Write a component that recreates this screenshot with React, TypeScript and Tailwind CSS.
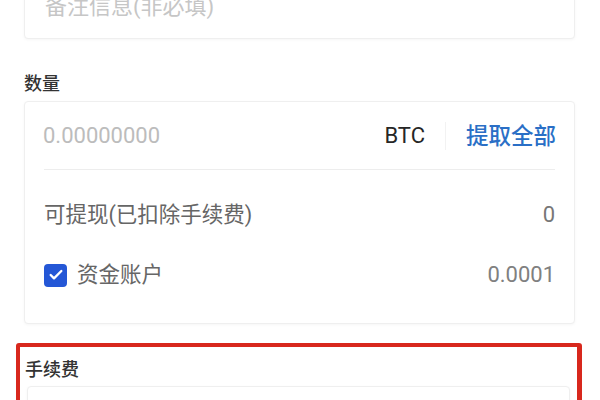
import { Check } from "lucide-react";

const FONT = "font-['Roboto','Noto_Sans_CJK_SC',sans-serif]";

const Card = ({ className = "", children }: { className?: string; children: React.ReactNode }) => (
  <div
    className={`bg-white border border-[#efefef] rounded-[4px] shadow-[0_1px_3px_rgba(0,0,0,0.04)] ${className}`}
  >
    {children}
  </div>
);

const App = () => {
  return (
    <div className={`w-[600px] h-[400px] overflow-hidden bg-white ${FONT}`}>
      <div className="px-[24px] pr-[25px]">
        {/* Remark */}
        <Card className="mt-[-26px] h-[65px] flex items-center px-[20px]">
          <span className="text-[22px] leading-[30px] text-[#c6c6c6]">备注信息(非必填)</span>
        </Card>

        {/* Amount */}
        <div className="mt-[33px] text-[18px] leading-[24px] font-medium text-[#333]">数量</div>
        <Card className="mt-[5px]">
          <div className="h-[67px] flex items-center px-[18px]">
            <span className="flex-1 text-[22px] leading-[30px] text-[#bcbcbc]">0.00000000</span>
            <span className="text-[22px] leading-[30px] text-[#262626]">BTC</span>
            <span className="w-px h-[28px] bg-[#f2f2f2] mx-[20px]" />
            <button className="text-[22.5px] leading-[30px] font-medium text-[#2a6fc6]">提取全部</button>
          </div>
          <div className="mx-[19px] h-px bg-[#ededed]" />
          <div className="px-[19px] pt-[30px] pb-[33px] flex flex-col gap-[30px]">
            <div className="flex items-center justify-between text-[21.5px] leading-[30px]">
              <span className="text-[#666]">可提现(已扣除手续费)</span>
              <span className="text-[#777] text-[22px]">0</span>
            </div>
            <div className="flex items-center justify-between text-[21.5px] leading-[30px]">
              <label className="flex items-center gap-[10px]">
                <span className="w-[23px] h-[23px] rounded-[4px] bg-[#2457d6] flex items-center justify-center">
                  <Check size={16} strokeWidth={3.5} color="#fff" />
                </span>
                <span className="text-[#666]">资金账户</span>
              </label>
              <span className="text-[#808080] text-[22px]">0.0001</span>
            </div>
          </div>
        </Card>
      </div>

      {/* Fee - highlighted */}
      <div className="mt-[19px] mx-[16px] mr-[18px] border-[4px] border-r-[5px] border-[#d8281d] rounded-[3px] h-[120px]">
        <div className="pl-[5px] pt-[11px] text-[18px] leading-[24px] font-medium text-[#333]">手续费</div>
        <Card className="mt-[4px] ml-[7px] mr-[7px] h-[80px]">
          <div />
        </Card>
      </div>
    </div>
  );
};

export default App;
